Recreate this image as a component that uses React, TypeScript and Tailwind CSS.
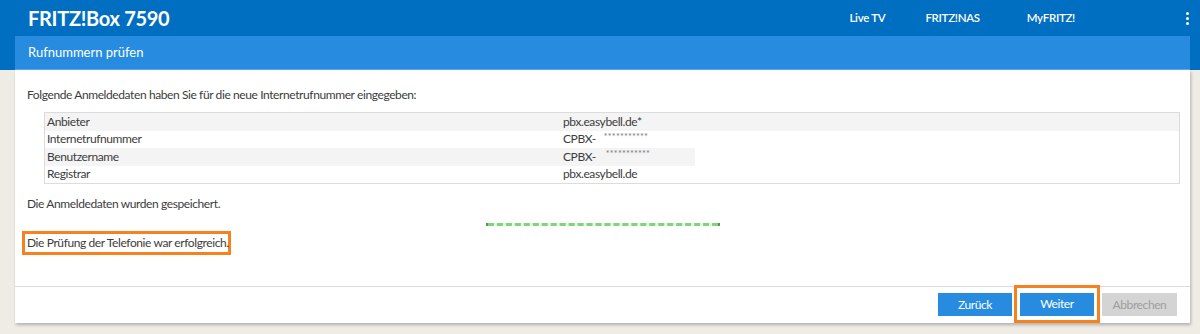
import React from "react";

const rows = [
	{ label: "Anbieter", value: "pbx.easybell.de*", shade: true },
	{ label: "Internetrufnummer", value: "CPBX-", masked: true, shade: false },
	{ label: "Benutzername", value: "CPBX-", masked: true, shade: true, cut: true },
	{ label: "Registrar", value: "pbx.easybell.de", shade: false },
];

export default function App() {
	return (
		<div
			className="w-[1200px] h-[334px] overflow-hidden bg-[#efece5] text-[#3c3c3c]"
			style={{ fontFamily: "Lato, 'Open Sans', sans-serif" }}
		>
			{/* top bar */}
			<div className="bg-[#006ec1] h-[70px]">
				<div className="h-[36px] flex items-center pl-[28px] pr-[11px] text-white">
					<div className="text-[20px] font-bold tracking-[-0.3px]">FRITZ!Box 7590</div>
					<nav className="ml-auto flex items-center text-[11.5px] font-semibold tracking-[-0.3px]">
						<span className="mr-[40px]">Live TV</span>
						<span className="mr-[47px]">FRITZ!NAS</span>
						<span className="mr-[111px]">MyFRITZ!</span>
						<span className="flex flex-col gap-[2px] items-center">
							<span className="w-[3px] h-[3px] bg-white rounded-full" />
							<span className="w-[3px] h-[3px] bg-white rounded-full" />
							<span className="w-[3px] h-[3px] bg-white rounded-full" />
						</span>
					</nav>
				</div>
				<div className="ml-[15px] w-[1175px] h-[34px] bg-[#278ce0] border-b border-[#5aa8ea] flex items-center pl-[13px] text-[13px] text-white">
					Rufnummern prüfen
				</div>
			</div>

			{/* content panel */}
			<div className="ml-[15px] w-[1175px] h-[253px] bg-white shadow-[1px_2px_3px_rgba(0,0,0,0.25)] flex flex-col text-[12px] tracking-[-0.4px]">
				<div className="flex-1 pl-[12px] pr-[10px]">
					<p className="pt-[18px] leading-[14px]">
						Folgende Anmeldedaten haben Sie für die neue Internetrufnummer eingegeben:
					</p>
					<div className="ml-[17px] mt-[10px] w-[1136px] border border-[#dcdcdc]">
						{rows.map((r) => (
							<div
								key={r.label}
								className={`relative flex h-[17.5px] items-center ${r.shade ? "bg-[#f4f4f4]" : "bg-white"}`}
							>
								<span className="w-[518px] pl-[2px]">{r.label}</span>
								<span className="flex items-center">
									{r.value}
									{r.masked && (
										<span
											className={`${r.cut ? "ml-[10px]" : "ml-[8px]"} text-[9px] tracking-[0.2px] text-[#777] -translate-y-[3px]`}
										>
											***********
										</span>
									)}
								</span>
								{r.cut && <span className="absolute left-[650px] right-0 top-0 bottom-0 bg-white" />}
							</div>
						))}
					</div>
					<p className="mt-[13px] leading-[14px]">Die Anmeldedaten wurden gespeichert.</p>
					<div className="ml-[459px] mt-[12px] w-[234px] h-[3px] flex items-center bg-[#e8f4e7]">
						<span className="w-[2px] h-[3px] bg-[#4f9a4c]" />
						<span className="flex-1 h-[3px] border-t-[3px] border-dashed border-[#80d47c]" />
						<span className="w-[2px] h-[3px] bg-[#4f9a4c]" />
					</div>
					<div className="-ml-[5px] mt-[5px] w-[209px] h-[24px] border-[3px] border-[#f5821f] flex items-center pl-[2px] whitespace-nowrap">
						Die Prüfung der Telefonie war erfolgreich.
					</div>
				</div>
				<div className="h-[37px] border-t border-[#dcdcdc] flex items-start justify-end pr-[13px] pt-[6px] text-[12px]">
					<button className="w-[74px] h-[23px] bg-[#278ce0] text-white">Zurück</button>
					<div className="ml-[2px] -mt-[8px] w-[86px] h-[38px] border-[3px] border-[#f5821f] flex items-center justify-center">
						<button className="w-[74px] h-[23px] bg-[#278ce0] text-white">Weiter</button>
					</div>
					<button className="ml-[2px] w-[75px] h-[23px] bg-[#d4d4d4] text-[#9e9e9e]">Abbrechen</button>
				</div>
			</div>
		</div>
	);
}
